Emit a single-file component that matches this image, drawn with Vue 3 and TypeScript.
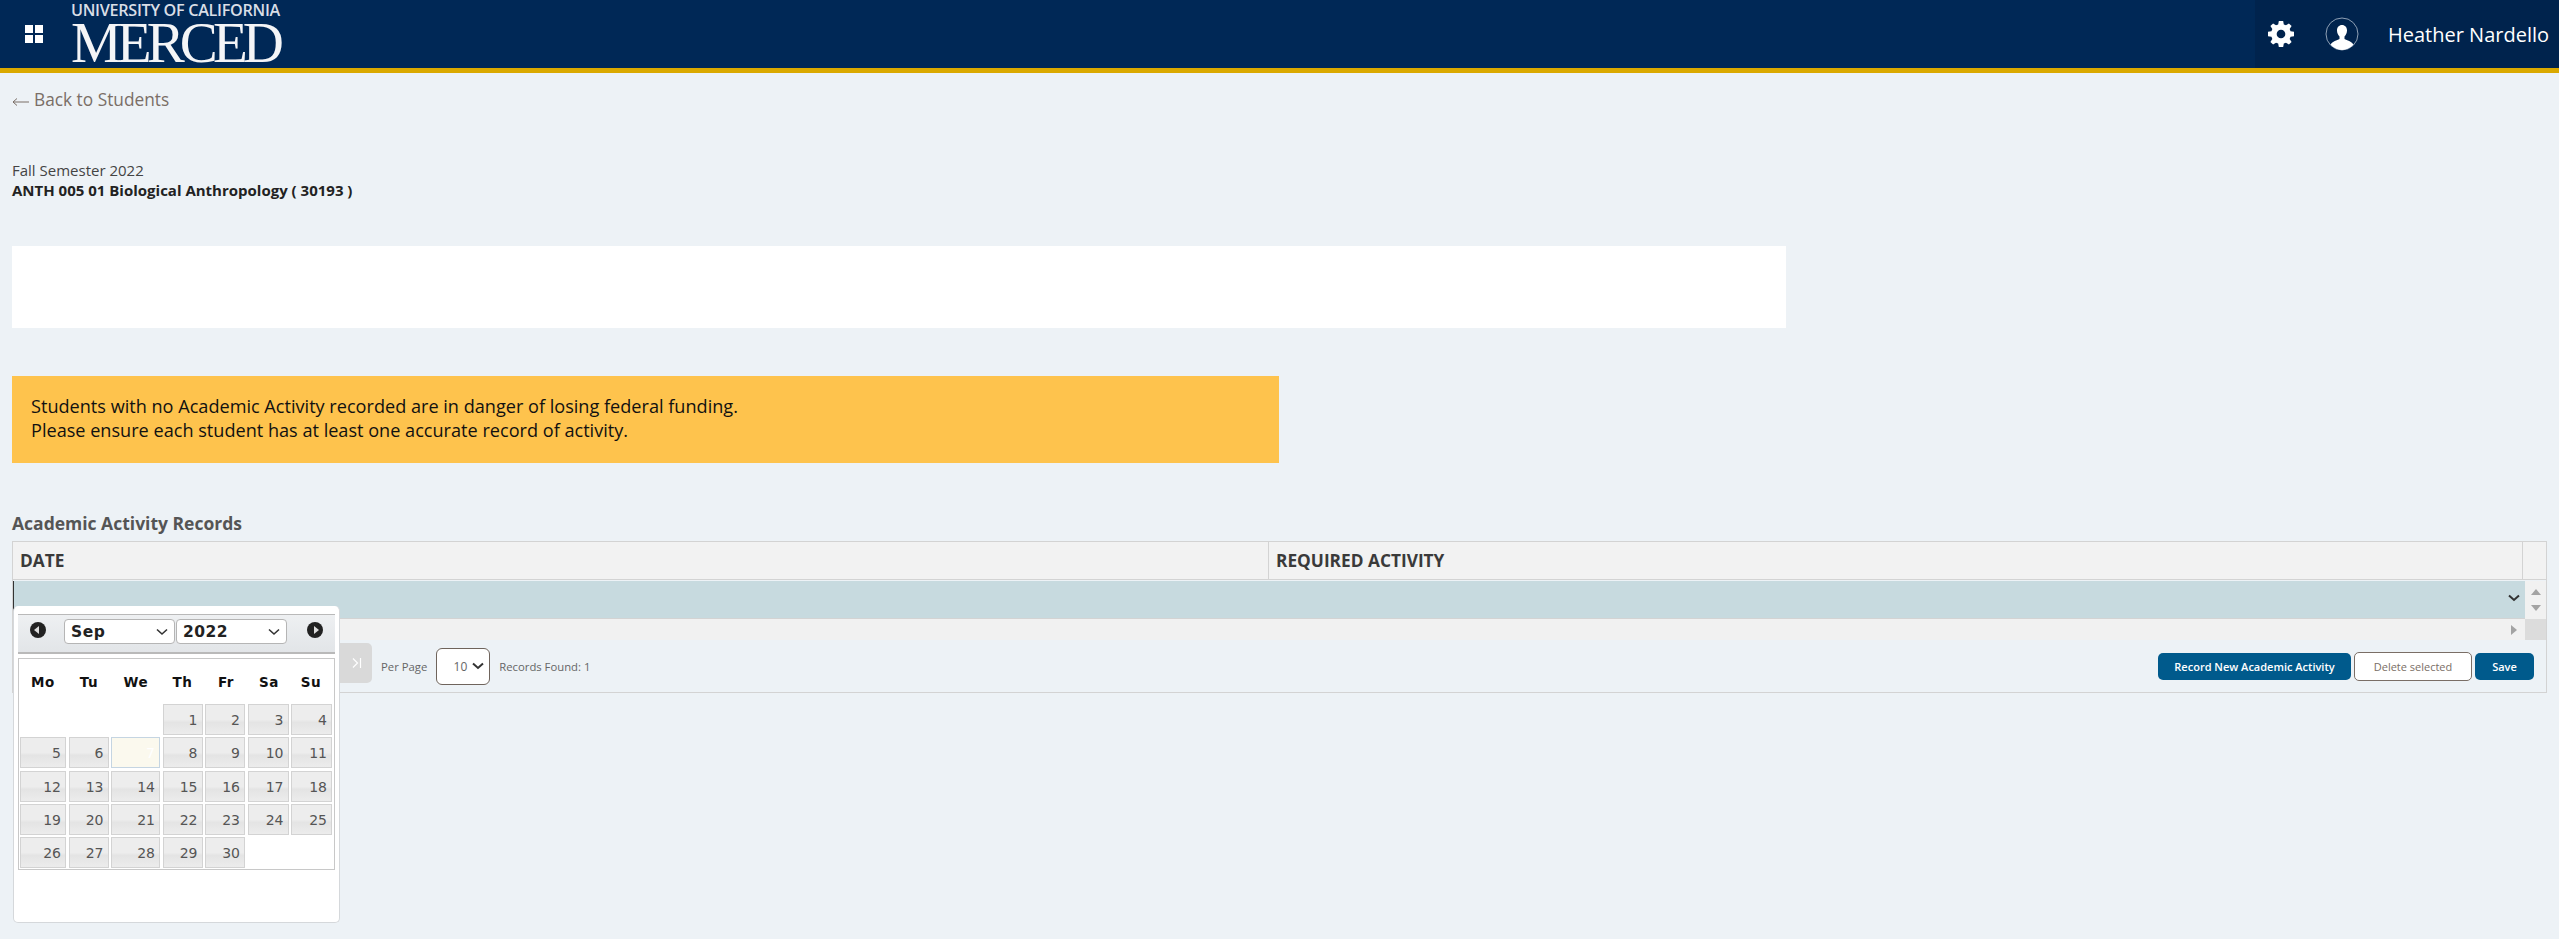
<script setup lang="ts">
const dayNames = ['Mo', 'Tu', 'We', 'Th', 'Fr', 'Sa', 'Su']
const days: (number | null)[] = [null, null, null]
for (let d = 1; d <= 30; d++) days.push(d)
</script>

<template>
  <div class="page">
    <header class="topbar">
      <div class="topbar-left">
        <svg class="apps" viewBox="0 0 18 18" width="18" height="18">
          <rect x="0" y="0" width="8" height="8" />
          <rect x="10" y="0" width="8" height="8" />
          <rect x="0" y="10" width="8" height="8" />
          <rect x="10" y="10" width="8" height="8" />
        </svg>
        <div class="logo">
          <div class="logo-top">UNIVERSITY OF CALIFORNIA</div>
          <div class="logo-main">MERCED</div>
        </div>
      </div>
      <div class="topbar-right">
        <svg class="gear" viewBox="0 0 24 24" width="26" height="26">
          <path fill="#fff" fill-rule="evenodd" d="M10 0h4l.6 3.2 2 .8L19.3 2.2l2.5 2.5-1.8 2.7.8 2 3.2.6v4l-3.2.6-.8 2 1.8 2.7-2.5 2.5-2.7-1.8-2 .8L14 24h-4l-.6-3.2-2-.8-2.7 1.8-2.5-2.5L4 16.600l-.8-2L0 14v-4l3.200-.6.8-2-1.800-2.700 2.500-2.500L7.400 4l2-.8zM12 8a4 4 0 1 0 0 8 4 4 0 0 0 0-8z" />
        </svg>
        <svg class="avatar" viewBox="0 0 34 34" width="34" height="34">
          <defs>
            <clipPath id="avatar-clip"><circle cx="17" cy="17" r="16" /></clipPath>
          </defs>
          <circle cx="17" cy="17" r="16" fill="none" stroke="#8fa0b5" stroke-width="1" />
          <g clip-path="url(#avatar-clip)" fill="#fff">
            <path d="M17 8c-3 0-5 2.300-5 5.500 0 2.300 1 4.500 2.500 6v2.500c-2.500 1.500-7 2.200-9 5.500 2.500 3.500 7 5.500 11.500 5.500s9-2 11.500-5.500c-2-3.300-6.500-4-9-5.500v-2.500c1.500-1.500 2.500-3.700 2.500-6C22 10.300 20 8 17 8z" />
          </g>
        </svg>
        <span class="user-name">Heather Nardello</span>
      </div>
    </header>

    <main class="content">
      <a class="back-link">
        <svg viewBox="0 0 17 10" width="17" height="10" class="arrow">
          <path d="M17 5H1M5 1.500L1 5l4 3.500" fill="none" stroke="#7a6e66" stroke-width="1" />
        </svg>
        <span>Back to Students</span>
      </a>

      <div class="course">
        <div>Fall Semester 2022</div>
        <div class="course-name">ANTH 005 01 Biological Anthropology ( 30193 )</div>
      </div>

      <div class="blank-box"></div>

      <div class="warning">
        <div>Students with no Academic Activity recorded are in danger of losing federal funding.</div>
        <div>Please ensure each student has at least one accurate record of activity.</div>
      </div>

      <h2 class="section-title">Academic Activity Records</h2>

      <section class="grid-panel">
        <div class="grid-head">
          <div class="head-cell date-col">DATE</div>
          <div class="head-cell activity-col">REQUIRED ACTIVITY</div>
          <div class="head-end"></div>
        </div>
        <div class="grid-row">
          <div class="row-fill">
            <svg viewBox="0 0 12 8" width="12" height="8" class="row-chevron">
              <path d="M1 1.500l5 4.500 5-4.500" fill="none" stroke="#333" stroke-width="2" />
            </svg>
          </div>
          <div class="vscroll">
            <span class="tri-up"></span>
            <span class="tri-down"></span>
          </div>
        </div>
        <div class="hscroll">
          <div class="hscroll-track"><span class="tri-right"></span></div>
          <div class="hscroll-corner"></div>
        </div>
        <div class="pager">
          <div class="pager-left">
            <div class="last-btn">
              <svg viewBox="0 0 10 12" width="10" height="12">
                <path d="M1 1.500l4.500 4.500L1 10.500M8.500 1v10" fill="none" stroke="#fff" stroke-width="1.200" />
              </svg>
            </div>
            <span class="per-page">Per Page</span>
            <div class="page-size">
              <span>10</span>
              <svg viewBox="0 0 12 8" width="12" height="8">
                <path d="M1 1.500l5 4.500 5-4.500" fill="none" stroke="#333" stroke-width="2" />
              </svg>
            </div>
            <span class="records">Records Found: 1</span>
          </div>
          <div class="pager-right">
            <button class="btn primary record">Record New Academic Activity</button>
            <button class="btn ghost">Delete selected</button>
            <button class="btn primary save">Save</button>
          </div>
        </div>
      </section>
    </main>

    <div class="datepicker">
      <div class="dp-header">
        <span class="dp-nav"><i class="left"></i></span>
        <div class="dp-select month">Sep
          <svg viewBox="0 0 12 8" width="12" height="8"><path d="M1 1.500l5 4.500 5-4.500" fill="none" stroke="#333" stroke-width="1.600" /></svg>
        </div>
        <div class="dp-select year">2022
          <svg viewBox="0 0 12 8" width="12" height="8"><path d="M1 1.500l5 4.500 5-4.500" fill="none" stroke="#333" stroke-width="1.600" /></svg>
        </div>
        <span class="dp-nav next"><i class="right"></i></span>
      </div>
      <div class="dp-body">
        <div class="dp-names">
          <span v-for="n in dayNames" :key="n">{{ n }}</span>
        </div>
        <div class="dp-days">
          <template v-for="(d, i) in days" :key="i">
            <span v-if="d === null" class="dp-empty"></span>
            <span v-else class="dp-day" :class="{ today: d === 7 }">{{ d }}</span>
          </template>
        </div>
      </div>
    </div>
  </div>
</template>

<style scoped>
.page {
  position: relative;
  width: 2559px;
  min-height: 939px;
  background: #edf2f6;
  font-family: "Open Sans", "DejaVu Sans", sans-serif;
  color: #333;
  overflow: hidden;
}

.topbar {
  display: flex;
  justify-content: space-between;
  height: 68px;
  background: #002856;
  border-bottom: 5px solid #daa900;
}

.topbar-left {
  display: flex;
  align-items: center;
}

.apps {
  margin-left: 25px;
  fill: #fff;
}

.logo {
  margin-left: 28px;
  color: #f4f5f7;
  width: 240px;
  height: 68px;
}

.logo-top {
  font-size: 16.200px;
  font-weight: 600;
  line-height: 18px;
  margin-top: 1px;
  letter-spacing: -0.3px;
  white-space: nowrap;
  color: #d9dee6;
}

.logo-main {
  font-family: "Liberation Serif", serif;
  font-size: 57px;
  line-height: 46px;
  letter-spacing: -4.900px;
  white-space: nowrap;
  margin-top: 1px;
}

.topbar-right {
  display: flex;
  align-items: center;
  width: 304px;
  background: #00234d;
  padding-left: 13px;
  box-sizing: border-box;
}

.avatar {
  margin-left: 31px;
}

.user-name {
  margin-left: 29px;
  color: #fff;
  font-size: 20px;
  white-space: nowrap;
}

.content {
  padding: 0 12px;
}

.back-link {
  display: flex;
  align-items: center;
  gap: 5px;
  margin-top: 15px;
  font-size: 17.300px;
  line-height: 24px;
  color: #7a6e66;
}

.arrow {
  margin-top: 3px;
}

.course {
  margin-top: 48px;
  font-size: 15px;
  line-height: 20px;
  color: #444;
}

.course-name {
  font-weight: 700;
  color: #222;
}

.blank-box {
  margin-top: 46px;
  width: 1774px;
  height: 82px;
  background: #fff;
}

.warning {
  margin-top: 48px;
  width: 1267px;
  height: 87px;
  box-sizing: border-box;
  padding: 18px 19px;
  background: #fec34d;
  color: #111;
  font-size: 18.130px;
  line-height: 24px;
}

.section-title {
  margin: 49px 0 0;
  font-size: 17.500px;
  line-height: 22px;
  font-weight: 700;
  color: #555;
}

.grid-panel {
  margin-top: 7px;
  width: 2535px;
  border: 1px solid #d3d3d3;
  box-sizing: border-box;
}

.grid-head {
  display: flex;
  height: 37px;
  background: #f2f2f2;
  border-bottom: 1px solid #d3d3d3;
  box-sizing: content-box;
}

.head-cell {
  font-size: 17.300px;
  font-weight: 700;
  line-height: 37px;
  color: #3a3a3a;
  padding-left: 7px;
  box-sizing: border-box;
}

.date-col {
  width: 1256px;
  border-right: 1px solid #d3d3d3;
}

.activity-col {
  width: 1254px;
  border-right: 1px solid #d3d3d3;
}

.grid-row {
  display: flex;
  height: 38px;
  margin-top: 1px;
}

.row-fill {
  flex: 1;
  display: flex;
  align-items: center;
  justify-content: flex-end;
  padding-right: 5px;
  background: #c7dadf;
  border-left: 1px solid #333;
  border-bottom: 1px solid #d3d3d3;
}

.row-chevron {
  margin-top: -4px;
}

.vscroll {
  width: 21px;
  flex: none;
  background: #f1f1f1;
  display: flex;
  flex-direction: column;
  align-items: center;
  justify-content: center;
  gap: 10px;
}

.tri-up {
  width: 0;
  height: 0;
  border-left: 5px solid transparent;
  border-right: 5px solid transparent;
  border-bottom: 6px solid #a3a3a3;
}

.tri-down {
  width: 0;
  height: 0;
  border-left: 5px solid transparent;
  border-right: 5px solid transparent;
  border-top: 6px solid #a3a3a3;
}

.hscroll {
  display: flex;
  height: 21px;
}

.hscroll-track {
  flex: 1;
  background: #f1f1f1;
  display: flex;
  align-items: center;
  justify-content: flex-end;
  padding-right: 8px;
}

.tri-right {
  width: 0;
  height: 0;
  border-top: 5px solid transparent;
  border-bottom: 5px solid transparent;
  border-left: 6px solid #a3a3a3;
}

.hscroll-corner {
  width: 21px;
  background: #dcdcdc;
}

.pager {
  display: flex;
  justify-content: space-between;
  align-items: center;
  height: 52px;
  padding-right: 12px;
}

.pager-left {
  display: flex;
  align-items: center;
  font-size: 11.300px;
  color: #666;
}

.last-btn {
  display: flex;
  align-items: center;
  justify-content: center;
  margin-left: 299px;
  width: 60px;
  height: 40px;
  padding-left: 30px;
  box-sizing: border-box;
  background: #d9d9d9;
  border-radius: 0 5px 5px 0;
  margin-top: -6px;
}

.per-page {
  margin-left: 9px;
}

.page-size {
  display: flex;
  align-items: center;
  justify-content: flex-end;
  gap: 5px;
  margin-left: 9px;
  width: 54px;
  height: 37px;
  padding-right: 5px;
  box-sizing: border-box;
  border: 1px solid #6f645c;
  border-radius: 6px;
  background: #fff;
  font-size: 12px;
}

.records {
  margin-left: 9px;
}

.pager-right {
  display: flex;
  align-items: center;
  gap: 3px;
}

.btn {
  height: 27px;
  border: none;
  border-radius: 5px;
  font-family: inherit;
  font-size: 11px;
  padding: 0;
}

.primary {
  background: #005a8c;
  color: #fff;
  font-weight: 600;
}

.record {
  width: 193px;
}

.save {
  width: 59px;
}

.ghost {
  width: 118px;
  height: 29px;
  background: #fff;
  border: 1px solid #7a6e66;
  color: #7a6e66;
}

.datepicker {
  position: absolute;
  left: 13px;
  top: 606px;
  width: 327px;
  height: 317px;
  box-sizing: border-box;
  background: #fff;
  border: 1px solid #d5d8db;
  border-top: none;
  border-radius: 5px;
  padding: 8px 4px 0;
  font-family: "DejaVu Sans", sans-serif;
}

.dp-header {
  position: relative;
  display: flex;
  align-items: center;
  height: 40px;
  box-sizing: border-box;
  background: linear-gradient(#eef0f2, #e2e5e8);
  border-top: 1px solid #b9b9b9;
  border-bottom: 2px solid #b9b9b9;
  padding: 0 0 4px 46px;
  gap: 1px;
}

.dp-nav {
  position: absolute;
  left: 12px;
  top: 7px;
  width: 16px;
  height: 16px;
  border-radius: 50%;
  background: #222;
}

.dp-nav.next {
  left: 289px;
}

.dp-nav i {
  position: absolute;
  top: 4px;
  width: 0;
  height: 0;
  border-top: 4px solid transparent;
  border-bottom: 4px solid transparent;
}

.dp-nav .left {
  left: 4px;
  border-right: 5px solid #ddd;
}

.dp-nav .right {
  left: 7px;
  border-left: 5px solid #ddd;
}

.dp-select {
  display: flex;
  align-items: center;
  justify-content: space-between;
  width: 111px;
  height: 25px;
  box-sizing: border-box;
  padding: 0 6px;
  background: #fff;
  border: 1px solid #b5b5b5;
  border-radius: 4px;
  font-size: 15.500px;
  font-weight: 700;
  letter-spacing: 0.5px;
  color: #222;
}

.dp-body {
  margin-top: 4px;
  height: 212px;
  box-sizing: border-box;
  border: 1px solid #c8c8c8;
  padding: 0 1px;
}

.dp-names {
  display: grid;
  grid-template-columns: 46px 46px 48px 45px 42px 44px 40px;
  height: 45px;
  align-items: center;
  text-align: center;
  font-size: 13.500px;
  font-weight: 700;
  color: #111;
  letter-spacing: 0.6px;
}

.dp-days {
  display: grid;
  grid-template-columns: 46px 40px 49px 40px 40px 41px 41px;
  grid-auto-rows: 31px;
  column-gap: 2.500px;
  row-gap: 2.250px;
}

.dp-day {
  box-sizing: border-box;
  border: 1px solid #d3d3d3;
  background: linear-gradient(#ededed 50%, #e4e4e4 60%, #ececec);
  font-size: 14px;
  line-height: 30px;
  text-align: right;
  padding-right: 4px;
  color: #555;
}

.dp-day.today {
  background: #fbf9ee;
  border-color: #c5d5e2;
  color: #fff;
}
</style>

<style>
html,
body {
  margin: 0;
  background: #edf2f6;
}
</style>
